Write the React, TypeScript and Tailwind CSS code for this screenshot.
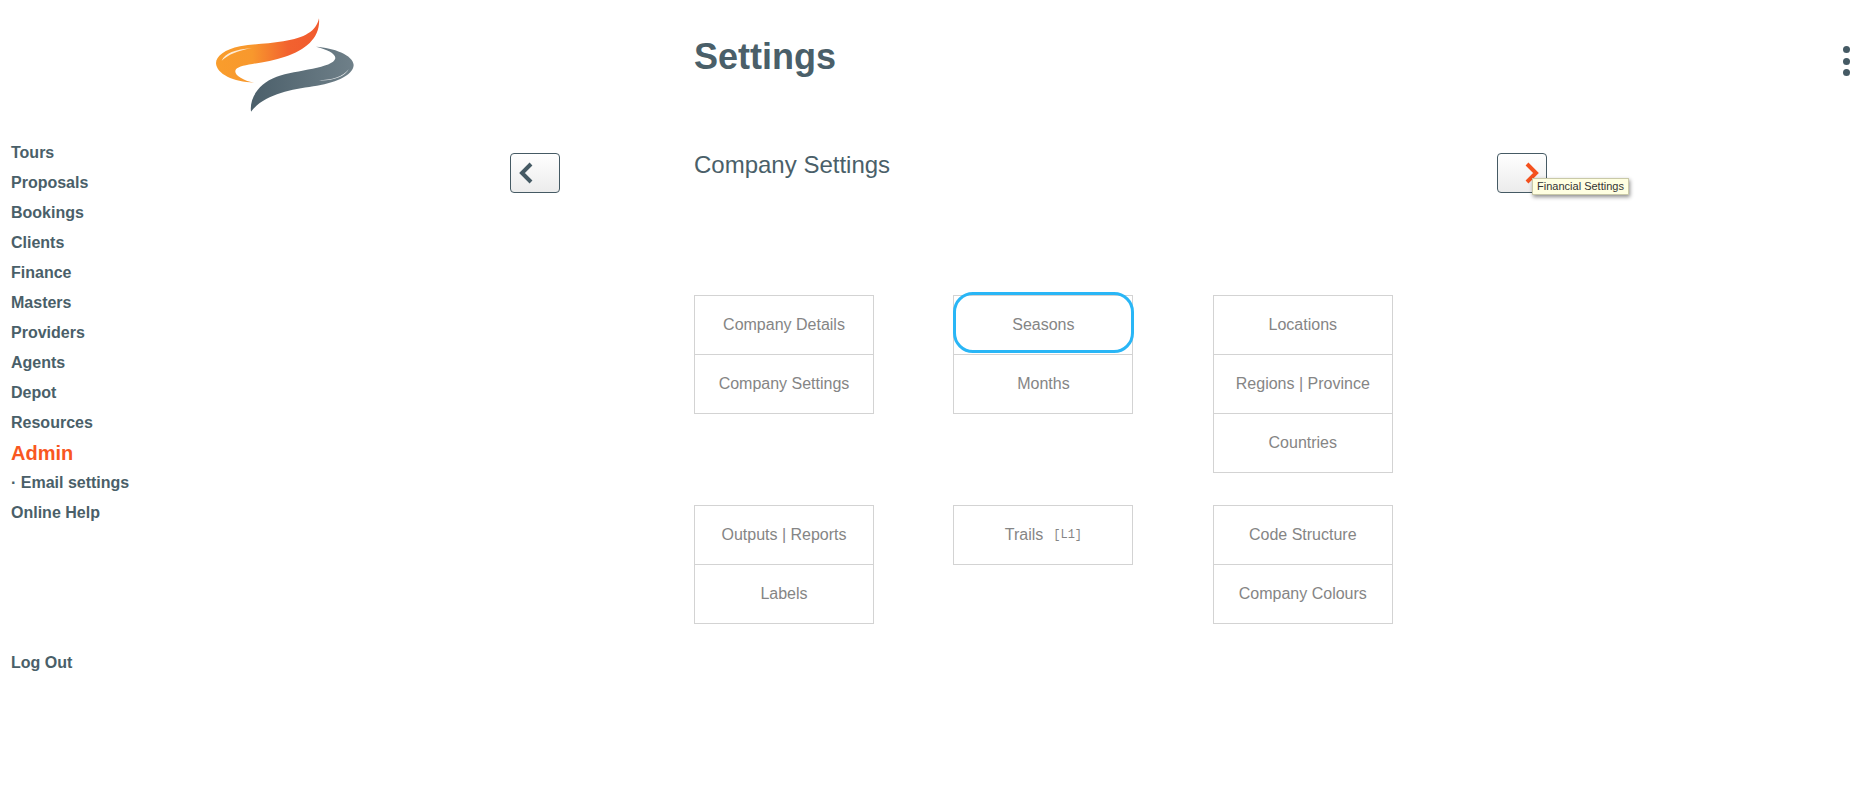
const navItems = ['Tours', 'Proposals', 'Bookings', 'Clients', 'Finance', 'Masters', 'Providers', 'Agents', 'Depot', 'Resources']

function Logo() {
  return (
    <svg viewBox="0 0 600 390" className="w-[200px] h-[130px] shrink-0">
      <defs>
        <linearGradient id="flame" x1="0" y1="0" x2="1" y2="0">
          <stop offset="0" stopColor="#f99d2c" />
          <stop offset="0.35" stopColor="#f8982d" />
          <stop offset="0.7" stopColor="#f2622f" />
          <stop offset="1" stopColor="#f15a2e" />
        </linearGradient>
        <linearGradient id="smoke" x1="0" y1="0" x2="1" y2="0">
          <stop offset="0" stopColor="#4b5f6a" />
          <stop offset="1" stopColor="#6f8089" />
        </linearGradient>
      </defs>
      <path
        d="M387 55C378 95 345 113 280 124C235 132 190 131 150 139C105 148 78 168 78 190C80 222 130 246 192 248C155 240 128 222 138 208C150 192 230 190 285 170C350 150 392 110 387 55Z"
        fill="url(#flame)"
      />
      <path d="M95 182C105 160 135 148 186 144C145 152 115 163 95 182Z" fill="#ffffff" fillOpacity="0.8" />
      <path
        d="M378 140C430 143 490 165 491 195C490 228 430 250 370 259C300 270 225 282 183 335C178 295 205 250 260 230C320 210 430 205 436 175C437 160 410 148 378 140Z"
        fill="url(#smoke)"
      />
      <path d="M385 241C425 241 460 230 476 208C465 232 425 243 385 241Z" fill="#ffffff" fillOpacity="0.85" />
    </svg>
  )
}

function Tile({ label, focused, tag }: { label: string; focused?: boolean; tag?: string }) {
  return (
    <div className="relative h-[60px] -mt-px first:mt-0 border border-[#d3d3d3] flex items-center justify-center text-[16px] text-[#858585]">
      {label}
      {tag && <span className="ml-[10px] text-[12px] font-['Liberation_Mono',monospace]">{tag}</span>}
      {focused && <span className="absolute -left-px -right-[2px] -top-[4px] h-[61px] rounded-[20px] border-[3px] border-[#29b6f6]" />}
    </div>
  )
}

function Group({ children }: { children: React.ReactNode }) {
  return <div className="flex flex-col">{children}</div>
}

export default function App() {
  return (
    <div className="min-h-[804px] bg-white font-['Liberation_Sans',Arial,sans-serif] text-[#4a5f69]">
      <header className="flex h-[138px]">
        <div className="w-[694px] pl-[190px]">
          <Logo />
        </div>
        <h1 className="flex-1 pt-[36px] text-[36px] leading-[42px] font-bold">Settings</h1>
        <div className="flex flex-col gap-[4.5px] pt-[46px] pr-[26px]">
          <span className="w-[7px] h-[7px] rounded-full bg-[#455a64]" />
          <span className="w-[7px] h-[7px] rounded-full bg-[#455a64]" />
          <span className="w-[7px] h-[7px] rounded-full bg-[#455a64]" />
        </div>
      </header>

      <div className="flex">
        <nav className="w-[510px] pl-[11px] text-[16px] font-bold">
          {navItems.map((item) => (
            <div key={item} className="h-[30px] leading-[30px]">{item}</div>
          ))}
          <div className="h-[30px] leading-[30px] text-[20px] text-[#f9571f]">Admin</div>
          <div className="h-[30px] leading-[30px]">· Email settings</div>
          <div className="h-[30px] leading-[30px]">Online Help</div>
          <div className="h-[30px] leading-[30px] mt-[120px]">Log Out</div>
        </nav>

        <button className="mt-[15px] w-[50px] h-[40px] shrink-0 flex items-center pl-[7px] rounded-[4px] border border-[#455a64] bg-gradient-to-b from-white to-[#ececec]">
          <svg viewBox="0 0 16 22" className="w-[16px] h-[22px]">
            <polyline points="13,2 4,11 13,20" fill="none" stroke="#455a64" strokeWidth="4" />
          </svg>
        </button>

        <main className="ml-[134px] w-[803px]">
          <h2 className="pt-[13px] text-[24px] leading-[28px]">Company Settings</h2>
          <div className="mt-[116px] grid grid-cols-[180px_180px_180px] gap-x-[79.4px] gap-y-[32px] items-start">
            <Group>
              <Tile label="Company Details" />
              <Tile label="Company Settings" />
            </Group>
            <Group>
              <Tile label="Seasons" focused />
              <Tile label="Months" />
            </Group>
            <Group>
              <Tile label="Locations" />
              <Tile label="Regions | Province" />
              <Tile label="Countries" />
            </Group>
            <Group>
              <Tile label="Outputs | Reports" />
              <Tile label="Labels" />
            </Group>
            <Group>
              <Tile label="Trails" tag="[L1]" />
            </Group>
            <Group>
              <Tile label="Code Structure" />
              <Tile label="Company Colours" />
            </Group>
          </div>
        </main>

        <button className="relative mt-[15px] w-[50px] h-[40px] shrink-0 flex items-center justify-end pr-[6px] rounded-[4px] border border-[#455a64] bg-gradient-to-b from-white to-[#ececec]">
          <svg viewBox="0 0 16 22" className="w-[16px] h-[22px]">
            <polyline points="3,2 12,11 3,20" fill="none" stroke="#f4511e" strokeWidth="4" />
          </svg>
          <span className="absolute left-[34px] top-[24px] h-[17px] w-[97px] flex items-center justify-center whitespace-nowrap border border-[#c9c9a8] bg-[#ffffe1] text-[11px] leading-none text-[#333333] shadow-[1px_2px_4px_rgba(0,0,0,0.45)]">
            Financial Settings
          </span>
        </button>
      </div>
    </div>
  )
}
